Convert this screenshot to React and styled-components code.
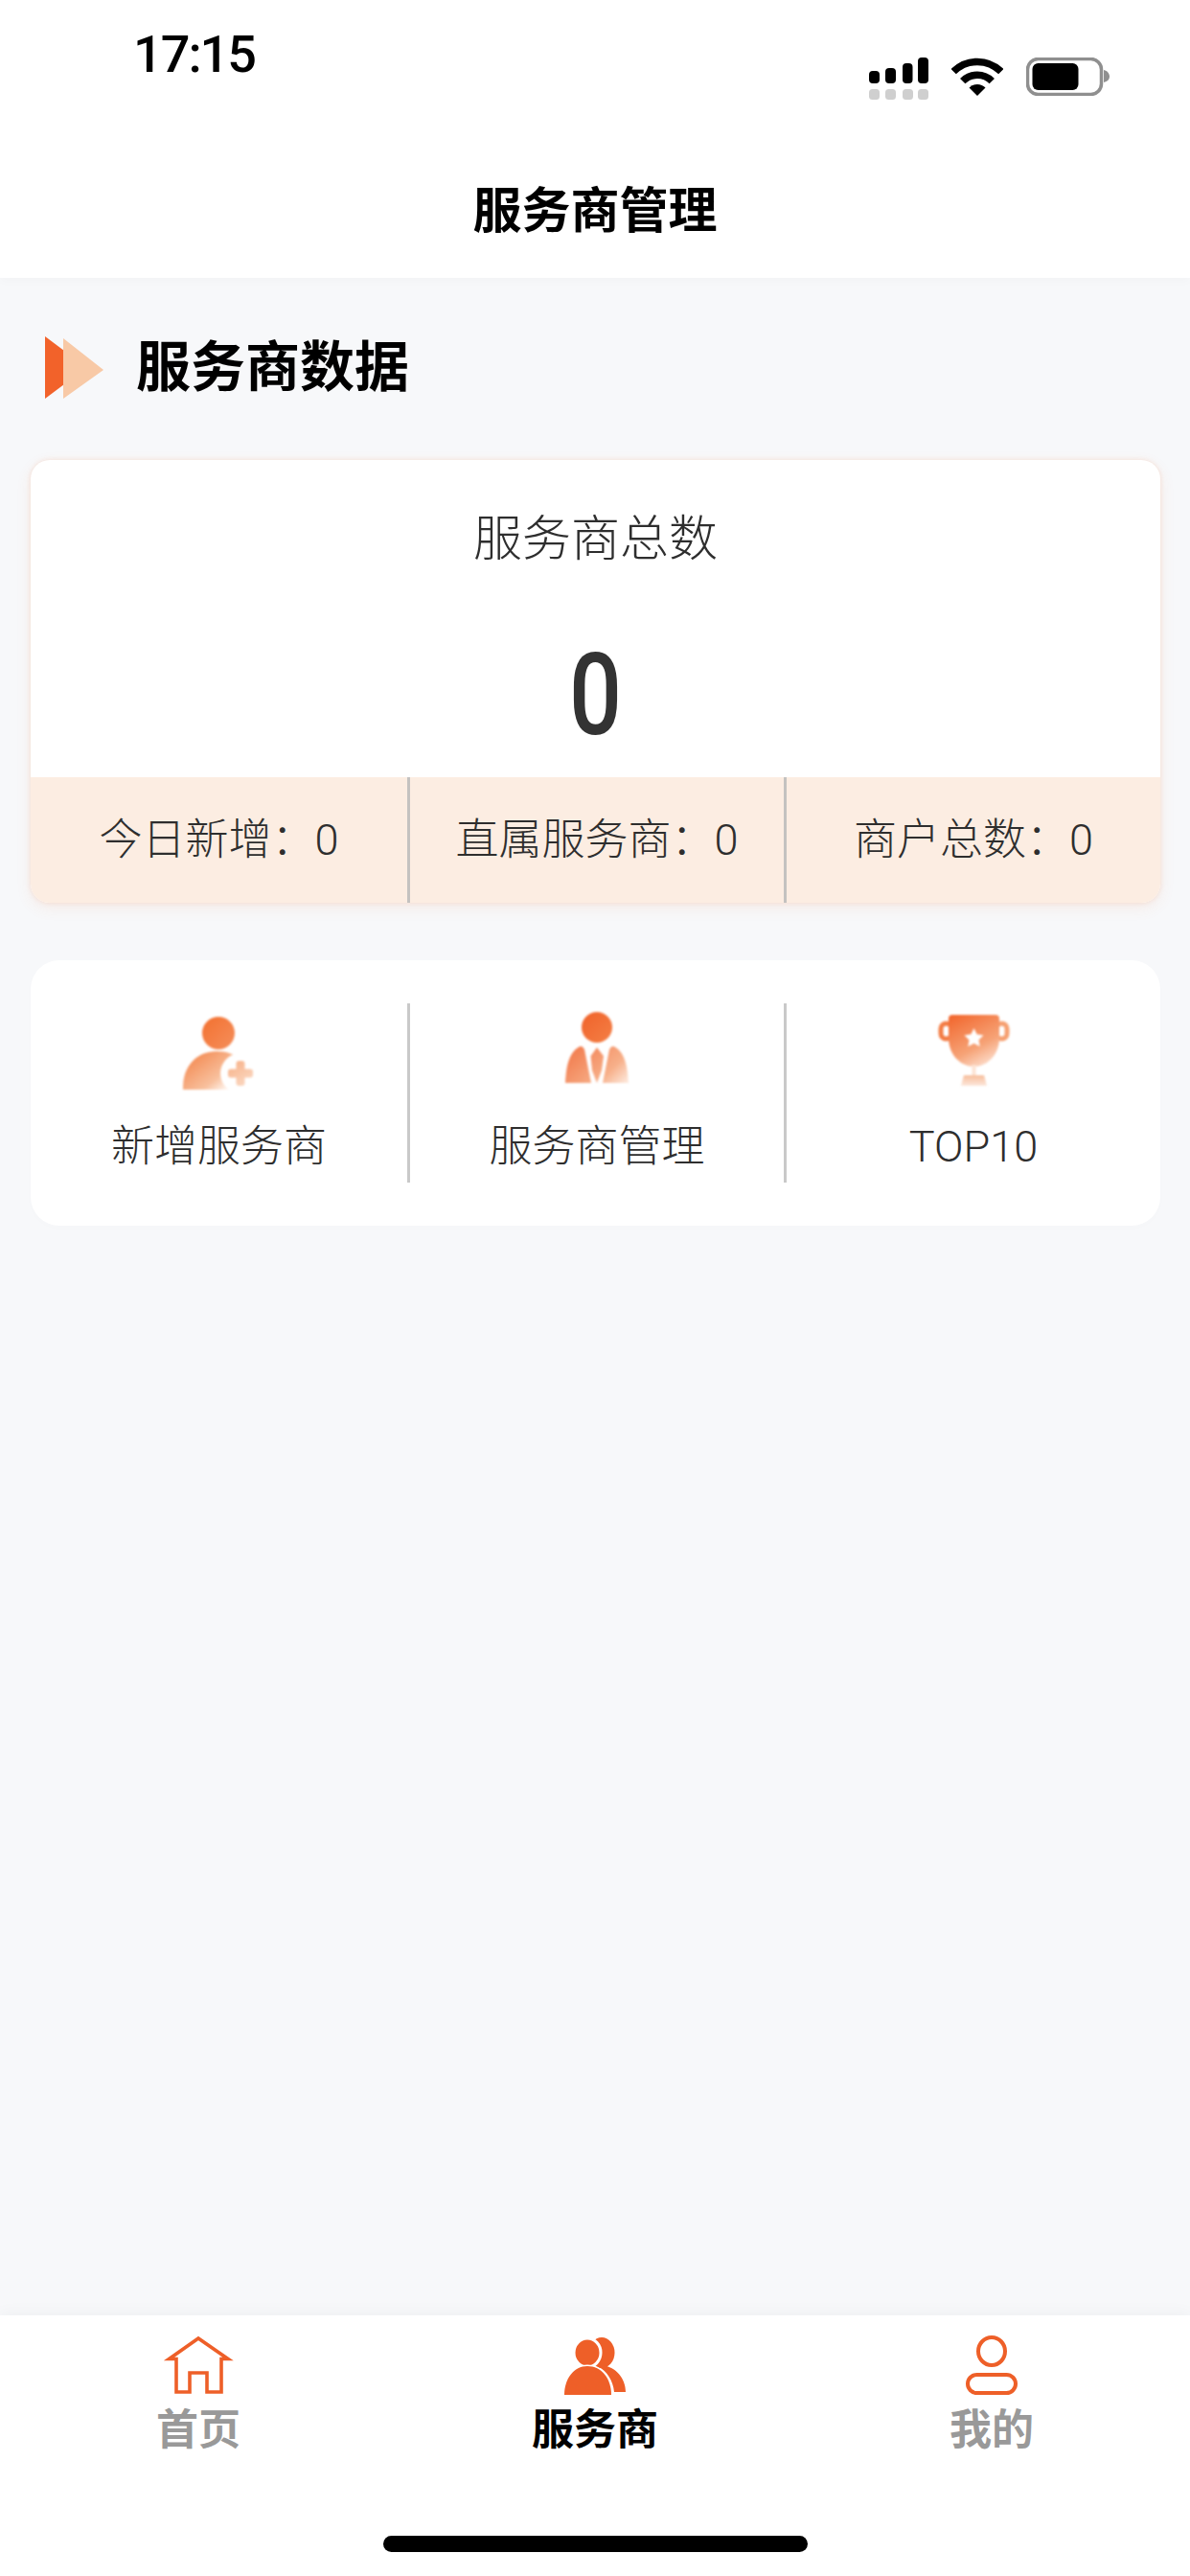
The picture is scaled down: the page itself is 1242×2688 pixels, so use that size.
import React from 'react';
import styled, { createGlobalStyle } from 'styled-components';

const GlobalStyle = createGlobalStyle`
  html, body {
    margin: 0;
    padding: 0;
    width: 1242px;
    height: 2688px;
    overflow: hidden;
    background: #f7f8fa;
    font-family: Roboto, "Noto Sans CJK SC", sans-serif;
  }
`;

const ORANGE = '#ee5f28';

const SignalIcon = () => (
  <svg width="62" height="44" viewBox="0 0 62 44">
    <rect x="0" y="14" width="11" height="13" rx="4" fill="#000" />
    <rect x="17" y="11" width="11" height="16" rx="4" fill="#000" />
    <rect x="35" y="6" width="10.5" height="21" rx="4" fill="#000" />
    <rect x="51" y="0" width="11" height="27" rx="4" fill="#000" />
    {[0, 17, 35, 51].map((x) => (
      <rect key={x} x={x} y="33" width="11" height="11" rx="3.5" fill="#cfcfcf" />
    ))}
  </svg>
);

const WifiIcon = () => (
  <svg width="54" height="40" viewBox="0 0 54 40">
    <path d="M2.2 14.7 A35 35 0 0 1 51.8 14.7" fill="none" stroke="#000" strokeWidth="7.5" />
    <path d="M11.7 24.7 A21.5 21.5 0 0 1 42.3 24.7" fill="none" stroke="#000" strokeWidth="7.5" />
    <path d="M27 40 L18.5 31.5 A12 12 0 0 1 35.5 31.5 Z" fill="#000" />
  </svg>
);

const BatteryIcon = () => (
  <svg width="87" height="40" viewBox="0 0 87 40">
    <rect x="1.5" y="1.5" width="77" height="37" rx="11" fill="none" stroke="#8f8f8f" strokeWidth="3.5" />
    <rect x="6.5" y="6" width="48" height="28" rx="6" fill="#000" />
    <path d="M81 13 C85 14 87 17 87 20 C87 23 85 25 81 26 Z" fill="#8f8f8f" />
  </svg>
);

const SectionArrows = () => (
  <svg width="61" height="65" viewBox="0 0 61 65">
    <path d="M0 0 L20 15 V50 L0 65 Z" fill="#f2622a" />
    <path d="M19 2 L61 35 L19 65 Z" fill="#f8c9a6" />
  </svg>
);

const AddPartnerIcon = () => (
  <svg width="120" height="100" viewBox="0 0 120 100">
    <defs>
      <linearGradient id="addHead" x1="0" y1="0" x2="1" y2="1">
        <stop offset="0" stopColor="#f3702f" />
        <stop offset="1" stopColor="#f58f5c" />
      </linearGradient>
      <linearGradient id="addBody" gradientUnits="userSpaceOnUse" x1="28" y1="50" x2="62" y2="94">
        <stop offset="0" stopColor="#f38348" />
        <stop offset="0.72" stopColor="#f8c09d" />
        <stop offset="1" stopColor="#fff6f0" />
      </linearGradient>
      <linearGradient id="addPlus" gradientUnits="userSpaceOnUse" x1="70" y1="58" x2="90" y2="88">
        <stop offset="0" stopColor="#f7ad82" />
        <stop offset="1" stopColor="#fbdcc8" />
      </linearGradient>
    </defs>
    <circle cx="59" cy="31" r="17" fill="url(#addHead)" />
    <path d="M22 90 C21 64 38 50 57 50 C68 50 76 53 84 60 V90 Z" fill="url(#addBody)" />
    <circle cx="82" cy="73" r="21" fill="#fff" />
    <path d="M77.5 63 Q77.5 60 80.5 60 H83.5 Q86.5 60 86.5 63 V68.5 H92 Q95 68.5 95 71.5 V74.5 Q95 77.5 92 77.5 H86.5 V83 Q86.5 86 83.5 86 H80.5 Q77.5 86 77.5 83 V77.5 H72 Q69 77.5 69 74.5 V71.5 Q69 68.5 72 68.5 H77.5 Z" fill="url(#addPlus)" />
  </svg>
);

const ManageIcon = () => (
  <svg width="120" height="100" viewBox="0 0 120 100">
    <defs>
      <linearGradient id="suitHead" x1="0" y1="0" x2="1" y2="1">
        <stop offset="0" stopColor="#f0622a" />
        <stop offset="1" stopColor="#f47f45" />
      </linearGradient>
      <linearGradient id="suitBody" gradientUnits="userSpaceOnUse" x1="34" y1="44" x2="80" y2="92">
        <stop offset="0" stopColor="#f2794a" />
        <stop offset="0.7" stopColor="#f7b08a" />
        <stop offset="1" stopColor="#fde6d8" />
      </linearGradient>
    </defs>
    <circle cx="60" cy="25" r="16" fill="url(#suitHead)" />
    <g fill="url(#suitBody)">
      <path d="M42 45 Q45 44 47 48 L54 83 H27 C28 70 29 52 42 45 Z" />
      <path d="M60 46 L67 55 L65 70 L60 83 L55 70 L53.5 55 Z" />
      <path d="M78 45 Q75 44 73 48 L66 83 H93 C92 70 91 52 78 45 Z" />
    </g>
  </svg>
);

const TrophyIcon = () => (
  <svg width="120" height="100" viewBox="0 0 120 100">
    <defs>
      <linearGradient id="cup" gradientUnits="userSpaceOnUse" x1="38" y1="10" x2="72" y2="74">
        <stop offset="0" stopColor="#f2642a" />
        <stop offset="0.6" stopColor="#f6a377" />
        <stop offset="1" stopColor="#fff0e8" />
      </linearGradient>
      <linearGradient id="cupFoot" x1="0" y1="0" x2="0" y2="1">
        <stop offset="0" stopColor="#f7bd9b" />
        <stop offset="1" stopColor="#fde8dc" />
      </linearGradient>
    </defs>
    <rect x="26" y="21" width="11" height="16" rx="5.5" fill="none" stroke="#f37d45" strokeWidth="5" />
    <rect x="84" y="21" width="11" height="16" rx="5.5" fill="none" stroke="#f6a071" strokeWidth="5" />
    <path d="M38 12 H83 Q87 12 87 16 V36 C87 54 74 66 60.5 66 C47 66 34 54 34 36 V16 Q34 12 38 12 Z" fill="url(#cup)" />
    <rect x="58.5" y="64" width="4" height="14" fill="#fde3d4" />
    <path d="M50 75 H71 L74 86 H47 Z" fill="url(#cupFoot)" />
    <path d="M60.5 26 L63.6 32.3 L70.5 33.3 L65.5 38.2 L66.7 45 L60.5 41.8 L54.3 45 L55.5 38.2 L50.5 33.3 L57.4 32.3 Z" fill="#fff" />
  </svg>
);

const HomeIcon = () => (
  <svg width="80" height="64" viewBox="0 0 80 64">
    <path d="M40 4 L9.5 25.5 H17 V60 H31 V40 H49 V60 H64 V25.5 H71 Z" fill="none" stroke={ORANGE} strokeWidth="3.6" strokeLinejoin="miter" />
  </svg>
);

const PartnersIcon = () => (
  <svg width="80" height="64" viewBox="0 0 80 64">
    <ellipse cx="47" cy="19" rx="13.5" ry="16" fill={ORANGE} />
    <path d="M48 32 C62 34 72 46 72 60 H60 C59 48 52 38 44 34 Z" fill={ORANGE} />
    <ellipse cx="32" cy="19" rx="14" ry="15" fill={ORANGE} stroke="#fff" strokeWidth="3" />
    <path d="M8 63 C8 46 18 33 32 33 C47 33 57 46 57 63 Z" fill={ORANGE} stroke="#fff" strokeWidth="3" paintOrder="stroke" />
  </svg>
);

const MineIcon = () => (
  <svg width="80" height="64" viewBox="0 0 80 64">
    <ellipse cx="40" cy="17.5" rx="14" ry="14.5" fill="none" stroke={ORANGE} strokeWidth="4" />
    <rect x="15" y="42" width="50" height="19" rx="9.5" fill="none" stroke={ORANGE} strokeWidth="4" />
  </svg>
);

const stats = [
  { label: '今日新增', value: 0 },
  { label: '直属服务商', value: 0 },
  { label: '商户总数', value: 0 },
];

const actions = [
  { label: '新增服务商', Icon: AddPartnerIcon },
  { label: '服务商管理', Icon: ManageIcon },
  { label: 'TOP10', Icon: TrophyIcon },
];

const tabs = [
  { label: '首页', Icon: HomeIcon },
  { label: '服务商', Icon: PartnersIcon, active: true },
  { label: '我的', Icon: MineIcon },
];

const App = () => (
  <Page>
    <GlobalStyle />
    <Header>
      <StatusBar>
        <Clock>17:15</Clock>
        <StatusIcons>
          <SignalIcon />
          <WifiIcon />
          <BatteryIcon />
        </StatusIcons>
      </StatusBar>
      <NavTitle>服务商管理</NavTitle>
    </Header>

    <Content>
      <SectionHead>
        <SectionArrows />
        <SectionTitle>服务商数据</SectionTitle>
      </SectionHead>

      <SummaryCard>
        <SummaryTop>
          <SummaryLabel>服务商总数</SummaryLabel>
          <SummaryValue>0</SummaryValue>
        </SummaryTop>
        <StatStrip>
          {stats.map((s) => (
            <StatCell key={s.label}>{s.label}：{s.value}</StatCell>
          ))}
        </StatStrip>
      </SummaryCard>

      <ActionCard>
        {actions.map(({ label, Icon }) => (
          <ActionCell key={label}>
            <ActionIcon>
              <Icon />
            </ActionIcon>
            <ActionLabel>{label}</ActionLabel>
          </ActionCell>
        ))}
      </ActionCard>
    </Content>

    <TabBar>
      <TabRow>
        {tabs.map(({ label, Icon, active }) => (
          <Tab key={label}>
            <Icon />
            <TabLabel $active={active}>{label}</TabLabel>
          </Tab>
        ))}
      </TabRow>
      <HomeIndicator />
    </TabBar>
  </Page>
);

const Page = styled.div`
  display: flex;
  flex-direction: column;
  width: 1242px;
  height: 2688px;
  background: #f7f8fa;
  color: #2e2e2e;
`;

const Header = styled.header`
  height: 290px;
  flex: none;
  background: #fff;
  box-shadow: 0 3px 10px rgba(0, 0, 0, 0.025);
`;

const StatusBar = styled.div`
  display: flex;
  justify-content: space-between;
  align-items: flex-start;
  height: 150px;
  padding: 26px 84px 0 139px;
  box-sizing: border-box;
`;

const Clock = styled.div`
  font-size: 54px;
  line-height: 62px;
  font-weight: 500;
  letter-spacing: -2px;
  color: #000;
`;

const StatusIcons = styled.div`
  display: flex;
  align-items: flex-start;
  gap: 24px;
  margin-top: 34px;
`;

const NavTitle = styled.h1`
  margin: 0;
  height: 140px;
  line-height: 141px;
  text-align: center;
  font-size: 51px;
  font-weight: 700;
  color: #000;
`;

const Content = styled.main`
  flex: 1;
  padding: 0 31px 0 32px;
`;

const SectionHead = styled.div`
  display: flex;
  align-items: center;
  gap: 34px;
  height: 190px;
  box-sizing: border-box;
  padding: 61px 0 64px 15px;
`;

const SectionTitle = styled.h2`
  margin: 0;
  font-size: 57px;
  line-height: 65px;
  font-weight: 700;
  color: #000;
`;

const SummaryCard = styled.section`
  border-radius: 20px;
  overflow: hidden;
  background: #fff;
  box-shadow: 0 0 5px rgba(245, 150, 100, 0.22), 0 5px 16px rgba(240, 120, 60, 0.1);
`;

const SummaryTop = styled.div`
  display: flex;
  flex-direction: column;
  align-items: center;
  height: 331px;
  box-sizing: border-box;
  padding-top: 53px;
`;

const SummaryLabel = styled.div`
  font-size: 51px;
  line-height: 60px;
  font-weight: 300;
  color: #2e2e2e;
`;

const SummaryValue = styled.div`
  margin-top: 73px;
  font-size: 118px;
  line-height: 120px;
  font-weight: 500;
  color: #333;
  transform: scaleX(0.82);
`;

const StatStrip = styled.div`
  display: grid;
  grid-template-columns: repeat(3, 1fr);
  height: 131px;
  background: #fcede2;
`;

const StatCell = styled.div`
  display: flex;
  align-items: center;
  justify-content: center;
  padding-bottom: 8px;
  font-size: 45px;
  font-weight: 300;
  color: #2e2e2e;
  white-space: pre;
  & + & {
    border-left: 3px solid #c4c2c0;
  }
`;

const ActionCard = styled.section`
  display: grid;
  grid-template-columns: repeat(3, 1fr);
  height: 277px;
  box-sizing: border-box;
  margin-top: 60px;
  padding: 45px 0;
  border-radius: 30px;
  background: #fff;
  box-shadow: 0 2px 10px rgba(0, 0, 0, 0.012);
`;

const ActionCell = styled.div`
  display: flex;
  flex-direction: column;
  align-items: center;
  & + & {
    border-left: 3px solid #c9c9c9;
  }
`;

// the gradient badges sit slightly soft on the card
const ActionIcon = styled.div`
  display: flex;
  filter: blur(0.8px);
`;

const ActionLabel = styled.div`
  margin-top: 20px;
  font-size: 45px;
  line-height: 60px;
  font-weight: 300;
  color: #2e2e2e;
`;

const TabBar = styled.nav`
  flex: none;
  height: 272px;
  box-sizing: border-box;
  background: #fff;
  box-shadow: 0 -4px 14px rgba(0, 0, 0, 0.03);
`;

const TabRow = styled.div`
  display: grid;
  grid-template-columns: repeat(3, 1fr);
  padding-top: 20px;
`;

const Tab = styled.div`
  display: flex;
  flex-direction: column;
  align-items: center;
`;

const TabLabel = styled.span`
  margin-top: 11px;
  font-size: 44px;
  line-height: 50px;
  font-weight: 700;
  color: ${(p) => (p.$active ? '#000' : '#999')};
`;

const HomeIndicator = styled.div`
  width: 443px;
  height: 17px;
  margin: 85px auto 0;
  border-radius: 9px;
  background: #000;
`;

export default App;
